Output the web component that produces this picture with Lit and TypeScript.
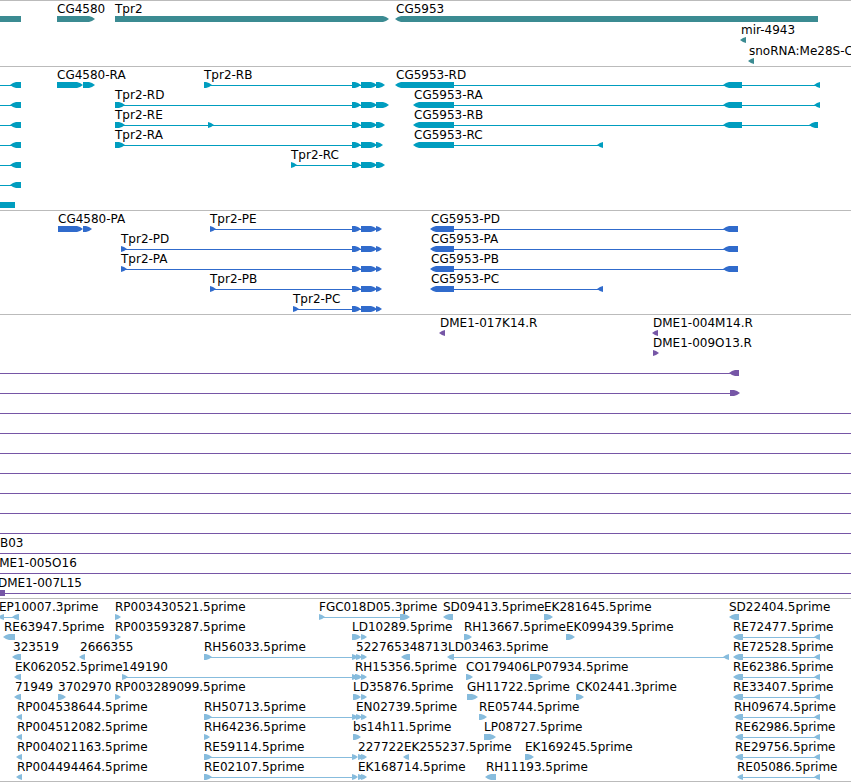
import { LitElement, html, svg, css } from "lit";
import { customElement, property } from "lit/decorators.js";

type Exon = [number, number];
// label, start of label, strand, exons
type Feature = [string, number, "<" | ">", Exon[]];
interface Track {
  name: string;
  tone: string;
  rows: Feature[][];
}

const FAR = 6000;

const acceptors = (end: number): Exon[] => [[352, 361], [361, 377], [376, end]];
const edge = (): Feature => ["", 0, "<", [[-40, -30], [10, 21]]];
const through = (label = "", x = 0): Feature => [label, x, ">", [[-30, -20], [FAR, FAR + 10]]];
const paired = (label: string, x: number): Feature => [label, x, "<", [[x, 743], [814, 820]]];

const tracks: Track[] = [
  {
    name: "Genes",
    tone: "gene",
    rows: [
      [
        ["", 0, "<", [[-20, 21]]],
        ["CG4580", 57, ">", [[57, 95]]],
        ["Tpr2", 115, ">", [[115, 389]]],
        ["CG5953", 396, "<", [[395, 818]]],
      ],
      [["mir-4943", 741, "<", [[740, 746]]]],
      [["snoRNA:Me28S-C", 749, "<", [[748, 754]]]],
    ],
  },
  {
    name: "Transcripts",
    tone: "transcript",
    rows: [
      [
        edge(),
        ["CG4580-RA", 57, ">", [[57, 83], [83, 95]]],
        ["Tpr2-RB", 204, ">", [[204, 212], ...acceptors(385)]],
        ["CG5953-RD", 396, "<", [[395, 454], [723, 742], [814, 820]]],
      ],
      [
        edge(),
        ["Tpr2-RD", 115, ">", [[115, 125], ...acceptors(389)]],
        ["CG5953-RA", 414, "<", [[413, 454], [723, 742], [814, 820]]],
      ],
      [
        edge(),
        ["Tpr2-RE", 115, ">", [[115, 125], [208, 214], ...acceptors(385)]],
        ["CG5953-RB", 414, "<", [[413, 454], [723, 742], [809, 818]]],
      ],
      [
        edge(),
        ["Tpr2-RA", 115, ">", [[115, 125], ...acceptors(383)]],
        ["CG5953-RC", 414, "<", [[413, 454], [597, 603]]],
      ],
      [edge(), ["Tpr2-RC", 291, ">", [[291, 297], ...acceptors(385)]]],
      [edge()],
      [["", 0, "<", [[-20, 15]]]],
    ],
  },
  {
    name: "Proteins",
    tone: "protein",
    rows: [
      [
        ["CG4580-PA", 58, ">", [[58, 83], [83, 92]]],
        ["Tpr2-PE", 210, ">", [[210, 216], ...acceptors(382)]],
        ["CG5953-PD", 431, "<", [[430, 454], [723, 738]]],
      ],
      [
        ["Tpr2-PD", 121, ">", [[121, 127], ...acceptors(382)]],
        ["CG5953-PA", 431, "<", [[430, 454], [723, 738]]],
      ],
      [
        ["Tpr2-PA", 121, ">", [[121, 127], ...acceptors(382)]],
        ["CG5953-PB", 431, "<", [[430, 454], [723, 738]]],
      ],
      [
        ["Tpr2-PB", 210, ">", [[210, 216], ...acceptors(382)]],
        ["CG5953-PC", 431, "<", [[430, 454], [597, 603]]],
      ],
      [["Tpr2-PC", 293, ">", [[293, 299], ...acceptors(382)]]],
    ],
  },
  {
    name: "BAC ends",
    tone: "clone",
    rows: [
      [
        ["DME1-017K14.R", 440, "<", [[439, 445]]],
        ["DME1-004M14.R", 653, "<", [[652, 658]]],
      ],
      [["DME1-009O13.R", 653, ">", [[653, 659]]]],
      [["", 0, "<", [[-30, -20], [729, 739]]]],
      [["", 0, ">", [[-30, -20], [730, 740]]]],
      [through()],
      [through()],
      [through()],
      [through()],
      [through()],
      [through()],
      [through()],
      [through("B03", 0)],
      [through("DME1-005O16", -10)],
      [["DME1-007L15", -2, "<", [[-20, 5], [FAR, FAR + 10]]]],
    ],
  },
  {
    name: "cDNA and EST alignments",
    tone: "est",
    rows: [
      [
        ["EP10007.3prime", -1, "<", [[-2, 4], [12, 19]]],
        ["RP003430521.5prime", 115, ">", [[115, 121]]],
        ["FGC018D05.3prime", 319, ">", [[319, 325], [400, 410]]],
        ["SD09413.5prime", 443, "<", [[443, 453]]],
        ["EK281645.5prime", 544, ">", [[544, 553]]],
        ["SD22404.5prime", 729, "<", [[729, 739]]],
      ],
      [
        ["RE63947.5prime", 4, "<", [[3, 15]]],
        ["RP003593287.5prime", 115, ">", [[115, 121]]],
        ["LD10289.5prime", 352, ">", [[352, 361], [361, 367]]],
        ["RH13667.5prime", 464, ">", [[464, 472]]],
        ["EK099439.5prime", 566, ">", [[566, 575]]],
        paired("RE72477.5prime", 733),
      ],
      [
        ["323519", 13, "<", [[12, 21]]],
        ["2666355", 80, "<", [[79, 85]]],
        ["RH56033.5prime", 204, ">", [[204, 212], [352, 358]]],
        ["522765", 356, ">", [[356, 362], [361, 367]]],
        ["348713", 402, "<", [[401, 410]]],
        ["LD03463.5prime", 448, "<", [[447, 454], [723, 729]]],
        paired("RE72528.5prime", 733),
      ],
      [
        ["EK062052.5prime", 15, "<", [[14, 21]]],
        ["149190", 122, ">", [[122, 128], [352, 358]]],
        ["RH15356.5prime", 355, ">", [[355, 362], [361, 367]]],
        ["CO179406", 466, ">", [[466, 473]]],
        ["LP07934.5prime", 530, ">", [[530, 543]]],
        paired("RE62386.5prime", 733),
      ],
      [
        ["71949", 15, "<", [[14, 21]]],
        ["3702970", 58, ">", [[58, 66]]],
        ["RP003289099.5prime", 115, ">", [[115, 121]]],
        ["LD35876.5prime", 353, ">", [[353, 361], [361, 367]]],
        ["GH11722.5prime", 467, ">", [[467, 478]]],
        ["CK02441.3prime", 576, ">", [[576, 584]]],
        paired("RE33407.5prime", 733),
      ],
      [
        ["RP004538644.5prime", 17, "<", [[16, 22]]],
        ["RH50713.5prime", 204, ">", [[204, 212], [352, 358]]],
        ["EN02739.5prime", 356, ">", [[356, 362], [361, 367]]],
        ["RE05744.5prime", 479, ">", [[479, 487]]],
        paired("RH09674.5prime", 734),
      ],
      [
        ["RP004512082.5prime", 17, "<", [[16, 22]]],
        ["RH64236.5prime", 204, ">", [[204, 210]]],
        ["bs14h11.5prime", 353, ">", [[353, 361]]],
        ["LP08727.5prime", 484, ">", [[484, 496]]],
        paired("RE62986.5prime", 735),
      ],
      [
        ["RP004021163.5prime", 17, "<", [[16, 22]]],
        ["RE59114.5prime", 204, ">", [[204, 212], [352, 358]]],
        ["227722", 358, ">", [[358, 364], [361, 367]]],
        ["EK255237.5prime", 404, "<", [[403, 409]]],
        ["EK169245.5prime", 525, ">", [[525, 534]]],
        paired("RE29756.5prime", 735),
      ],
      [
        ["RP004494464.5prime", 17, "<", [[16, 22]]],
        ["RE02107.5prime", 204, ">", [[204, 212], [352, 358]]],
        ["EK168714.5prime", 358, ">", [[358, 364], [361, 367]]],
        ["RH11193.5prime", 486, "<", [[485, 496]]],
        paired("RE05086.5prime", 737),
      ],
    ],
  },
];

@customElement("feature-track")
export class FeatureTrack extends LitElement {
  @property({ attribute: false }) track!: Track;

  static styles = css`
    :host {
      display: block;
    }
    .rows {
      display: grid;
      padding: 1px 0 2px;
      border-top: 1px solid #bbb;
    }
    .gene {
      color: #3b8b92;
      row-gap: 1px;
    }
    .transcript {
      color: #009dbf;
    }
    .protein {
      color: #306bcc;
    }
    .clone {
      color: #7656a6;
    }
    .est {
      color: #87bcdd;
      padding-bottom: 1px;
      border-bottom: 1px solid #bbb;
    }
    .row {
      position: relative;
      display: grid;
      grid-template-rows: 14px 6px;
    }
    .labels {
      position: relative;
      color: #000;
    }
    .label {
      position: absolute;
      top: 0;
      white-space: nowrap;
    }
    .glyphs {
      display: block;
      width: 100%;
      height: 6px;
    }
    .exon {
      fill: currentColor;
    }
    .intron {
      fill: currentColor;
      shape-rendering: crispEdges;
    }
  `;

  private exon([a, b]: Exon, strand: string) {
    return strand === ">"
      ? svg`<path class="exon" d="M${a} 0H${b - 6}L${b - 3} 1L${b} 3L${b - 3} 5L${b - 6} 6H${a}Z"></path>`
      : svg`<path class="exon" d="M${b} 0H${a + 6}L${a + 3} 1L${a} 3L${a + 3} 5L${a + 6} 6H${b}Z"></path>`;
  }

  private feature([, , strand, exons]: Feature) {
    const from = exons[0][1];
    const to = exons[exons.length - 1][0];
    return svg`<g>
      ${to > from ? svg`<rect class="intron" x=${from - 2} y="3" width=${to - from + 4} height="1"></rect>` : null}
      ${exons.map((e) => this.exon(e, strand))}
    </g>`;
  }

  render() {
    const { name, tone, rows } = this.track;
    return html`<section class="rows ${tone}" aria-label=${name}>
      ${rows.map(
        (row) => html`<div class="row">
          <div class="labels">
            ${row.map(([text, x]) => (text ? html`<span class="label" style="left:${x}px">${text}</span>` : null))}
          </div>
          <svg class="glyphs" aria-hidden="true">${row.map((f) => this.feature(f))}</svg>
        </div>`
      )}
    </section>`;
  }
}

@customElement("app-root")
export class AppRoot extends LitElement {
  static styles = css`
    :host {
      display: block;
      overflow: hidden;
      background: #fff;
      font: 12px/14px "DejaVu Sans", Verdana, sans-serif;
    }
  `;

  render() {
    return html`<main>${tracks.map((t) => html`<feature-track .track=${t}></feature-track>`)}</main>`;
  }
}
